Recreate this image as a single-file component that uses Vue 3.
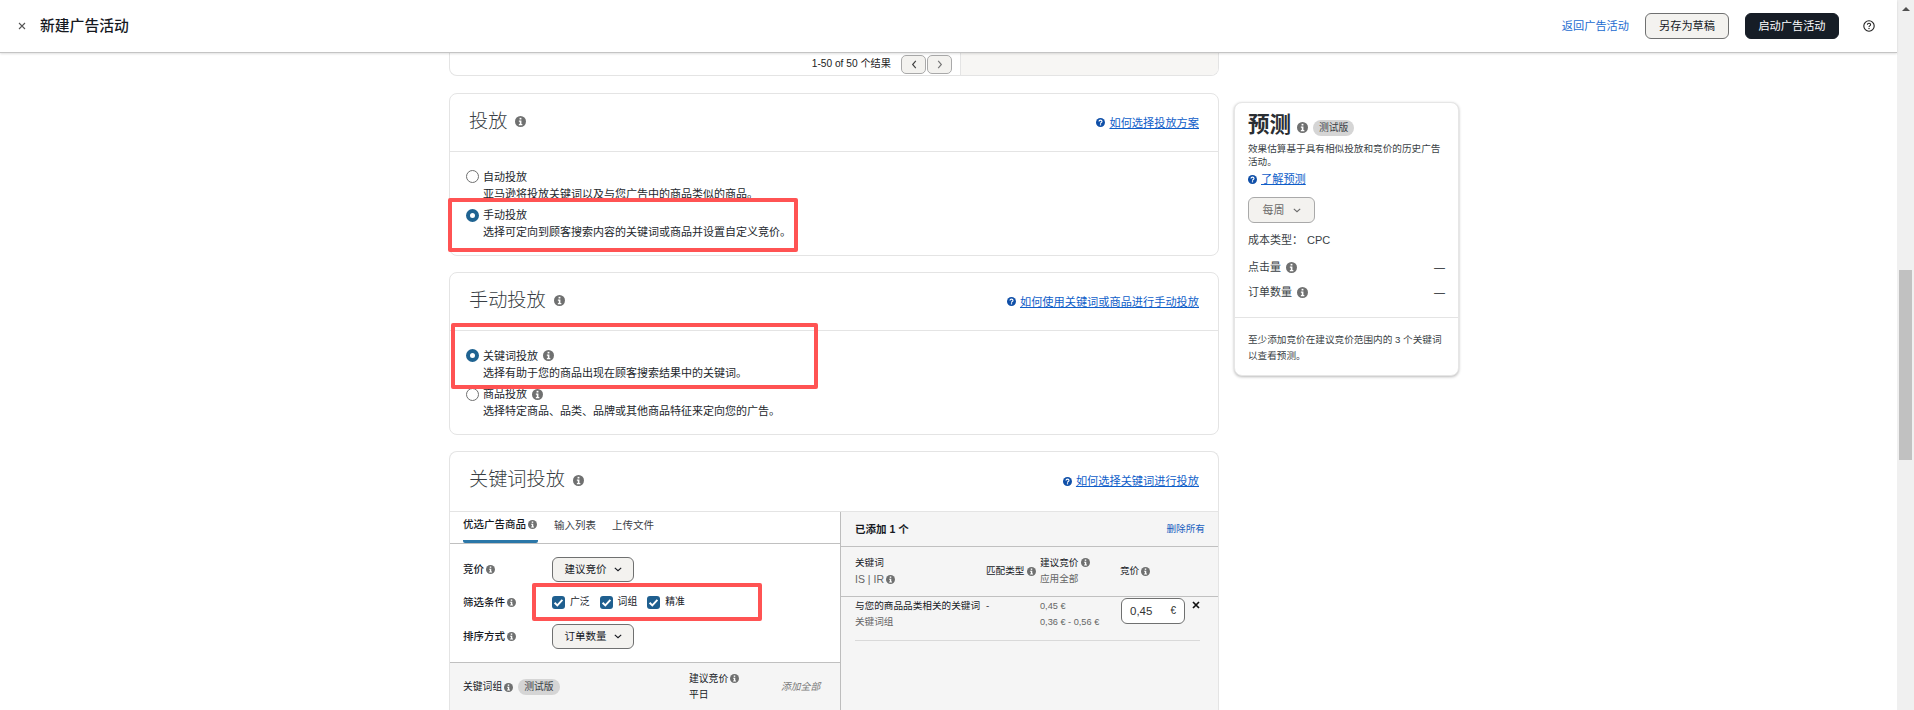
<template>
  <div class="page">
    <svg class="sprite" aria-hidden="true">
      <symbol id="info" viewBox="0 0 12 12">
        <circle cx="6" cy="6" r="6" fill="currentColor" />
        <rect x="5" y="2" width="2" height="1.8" fill="#fff" />
        <path d="M4.2 5h2.8v3.8h1V10H4.2V8.8h1V6.200H4.200z" fill="#fff" />
      </symbol>
      <symbol id="help" viewBox="0 0 12 12">
        <circle cx="6" cy="6" r="6" fill="currentColor" />
        <path d="M4 4.700C4 3.500 4.900 2.900 6 2.900s2 .6 2 1.700c0 1.500-2 1.500-2 2.900" fill="none" stroke="#fff" stroke-width="1.500" />
        <rect x="5.200" y="8.300" width="1.600" height="1.500" fill="#fff" />
      </symbol>
      <symbol id="chevron" viewBox="0 0 10 6">
        <path d="M1 1l4 3.600L9 1" fill="none" stroke="currentColor" stroke-width="1.400" />
      </symbol>
    </svg>

    <div class="viewport">
      <header class="topbar">
        <svg class="close" viewBox="0 0 8 8"><path d="M1 1l6 6M7 1L1 7" stroke="#555" stroke-width="1.100" /></svg>
        <span class="topbar-title">新建广告活动</span>
        <a class="back-link">返回广告活动</a>
        <button class="btn btn-draft">另存为草稿</button>
        <button class="btn btn-launch">启动广告活动</button>
        <svg class="top-help" viewBox="0 0 12 12">
          <circle cx="6" cy="6" r="5.200" fill="none" stroke="#222" stroke-width="1.100" />
          <path d="M4.400 4.800C4.400 3.800 5.100 3.300 6 3.300s1.600.5 1.600 1.400c0 1.200-1.600 1.200-1.600 2.300" fill="none" stroke="#222" stroke-width="1.100" />
          <rect x="5.400" y="7.900" width="1.200" height="1.200" fill="#222" />
        </svg>
      </header>

      <div class="content">
        <main class="main-col">
          <section class="card pager-card">
            <div class="pager">
              <span>1-50 of 50 个结果</span>
              <div class="pager-btns">
                <button class="page-btn"><svg viewBox="0 0 6 10"><path d="M5 1L1.500 5 5 9" fill="none" stroke="#444" stroke-width="1.300" /></svg></button>
                <button class="page-btn"><svg viewBox="0 0 6 10"><path d="M1 1l3.500 4L1 9" fill="none" stroke="#777" stroke-width="1.300" /></svg></button>
              </div>
            </div>
            <div class="pager-side"></div>
          </section>

          <section v-for="group in radioGroups" :key="group.title" class="card">
            <div class="card-head">
              <h2 class="card-title">{{ group.title }}<svg class="info info-lg"><use href="#info" /></svg></h2>
              <a class="help-link"><svg class="help-icon"><use href="#help" /></svg><span>{{ group.link }}</span></a>
            </div>
            <div class="radio-list">
              <div v-for="opt in group.options" :key="opt.label" class="radio-row">
                <span class="radio" :class="{ checked: opt.checked }"></span>
                <div>
                  <div class="radio-label">{{ opt.label }}<svg v-if="opt.info" class="info info-lg"><use href="#info" /></svg></div>
                  <div class="radio-desc">{{ opt.desc }}</div>
                </div>
              </div>
            </div>
          </section>

          <section class="card keyword-card">
            <div class="card-head">
              <h2 class="card-title">关键词投放<svg class="info info-lg"><use href="#info" /></svg></h2>
              <a class="help-link"><svg class="help-icon"><use href="#help" /></svg><span>如何选择关键词进行投放</span></a>
            </div>
            <div class="keyword-body">
              <div class="kw-left">
                <div class="tabs">
                  <div class="tab active">优选广告商品<svg class="info"><use href="#info" /></svg></div>
                  <div class="tab">输入列表</div>
                  <div class="tab">上传文件</div>
                </div>
                <div class="filters">
                  <div class="filter-row">
                    <span class="filter-label">竞价<svg class="info"><use href="#info" /></svg></span>
                    <button class="select-btn">建议竞价<svg class="chev"><use href="#chevron" /></svg></button>
                  </div>
                  <div class="filter-row filter-checks">
                    <span class="filter-label">筛选条件<svg class="info"><use href="#info" /></svg></span>
                    <label v-for="m in matchTypes" :key="m" class="check">
                      <span class="check-box"><svg viewBox="0 0 10 10"><path d="M2 5.200l2.100 2L8 3" fill="none" stroke="#fff" stroke-width="1.500" /></svg></span>
                      {{ m }}
                    </label>
                  </div>
                  <div class="filter-row">
                    <span class="filter-label">排序方式<svg class="info"><use href="#info" /></svg></span>
                    <button class="select-btn">订单数量<svg class="chev"><use href="#chevron" /></svg></button>
                  </div>
                </div>
                <div class="suggest-head">
                  <span class="suggest-name">关键词组<svg class="info"><use href="#info" /></svg><span class="badge">测试版</span></span>
                  <span class="suggest-bid">
                    <span>建议竞价<svg class="info"><use href="#info" /></svg></span>
                    <span>平日</span>
                  </span>
                  <span class="add-all">添加全部</span>
                </div>
              </div>

              <div class="kw-right">
                <div class="added-head">
                  <b>已添加 1 个</b>
                  <a class="remove-all">删除所有</a>
                </div>
                <div class="added-cols">
                  <div class="col-stack">
                    <span>关键词</span>
                    <span class="muted latin">IS | IR<svg class="info"><use href="#info" /></svg></span>
                  </div>
                  <div class="col-center">匹配类型<svg class="info"><use href="#info" /></svg></div>
                  <div class="col-stack">
                    <span>建议竞价<svg class="info"><use href="#info" /></svg></span>
                    <span class="muted">应用全部</span>
                  </div>
                  <div class="col-center">竞价<svg class="info"><use href="#info" /></svg></div>
                </div>
                <div class="added-row">
                  <div class="col-stack">
                    <span>与您的商品品类相关的关键词</span>
                    <span class="muted">关键词组</span>
                  </div>
                  <div>-</div>
                  <div class="col-stack muted bid-values">
                    <span>0,45 €</span>
                    <span>0,36 € - 0,56 €</span>
                  </div>
                  <div class="bid-cell">
                    <div class="bid-input"><span>0,45</span><span class="euro">€</span></div>
                    <svg class="remove-x" viewBox="0 0 8 8"><path d="M1 1l6 6M7 1L1 7" stroke="#111" stroke-width="1.700" /></svg>
                  </div>
                </div>
              </div>
            </div>
          </section>
        </main>

        <aside class="forecast">
          <div class="forecast-title">
            <h2>预测</h2>
            <svg class="info info-lg"><use href="#info" /></svg>
            <span class="badge">测试版</span>
          </div>
          <p class="forecast-desc">效果估算基于具有相似投放和竞价的历史广告活动。</p>
          <a class="help-link learn"><svg class="help-icon"><use href="#help" /></svg><span>了解预测</span></a>
          <button class="period-btn">每周<svg class="chev"><use href="#chevron" /></svg></button>
          <div class="cost-type"><span>成本类型：</span><span>CPC</span></div>
          <div v-for="m in metrics" :key="m" class="metric">
            <span>{{ m }}<svg class="info info-lg"><use href="#info" /></svg></span>
            <span class="dash">—</span>
          </div>
          <p class="forecast-note">至少添加竞价在建议竞价范围内的 3 个关键词以查看预测。</p>
        </aside>
      </div>
    </div>

    <div class="scrollbar">
      <span class="scroll-up"></span>
      <span class="scroll-thumb"></span>
    </div>

    <!-- red annotation boxes drawn over the screenshot -->
    <div class="mark mark-manual"></div>
    <div class="mark mark-keyword"></div>
    <div class="mark mark-filter"></div>
  </div>
</template>

<script setup>
const radioGroups = [
  {
    title: '投放',
    link: '如何选择投放方案',
    options: [
      { label: '自动投放', desc: '亚马逊将投放关键词以及与您广告中的商品类似的商品。' },
      { label: '手动投放', desc: '选择可定向到顾客搜索内容的关键词或商品并设置自定义竞价。', checked: true },
    ],
  },
  {
    title: '手动投放',
    link: '如何使用关键词或商品进行手动投放',
    options: [
      { label: '关键词投放', desc: '选择有助于您的商品出现在顾客搜索结果中的关键词。', checked: true, info: true },
      { label: '商品投放', desc: '选择特定商品、品类、品牌或其他商品特征来定向您的广告。', info: true },
    ],
  },
]

const matchTypes = ['广泛', '词组', '精准']
const metrics = ['点击量', '订单数量']
</script>

<style scoped>
.page {
  position: relative;
  display: flex;
  height: 710px;
  overflow: hidden;
  background: #fff;
  color: #16191f;
  font-family: "Liberation Sans", "Noto Sans CJK SC", sans-serif;
  font-size: 11px;
  line-height: 16px;
}

.sprite {
  position: absolute;
  width: 0;
  height: 0;
}

.viewport {
  flex: 1;
  min-width: 0;
}

.topbar {
  position: relative;
  z-index: 2;
  display: flex;
  align-items: center;
  height: 53px;
  padding: 0 22px 1px 18px;
  background: #fff;
  border-bottom: 1px solid #c4c4c4;
  box-shadow: 0 1px 2px rgba(0, 0, 0, 0.12);
  box-sizing: border-box;
}

.close {
  width: 8px;
  height: 8px;
  margin-right: 14px;
}

.topbar-title {
  flex: 1;
  font-size: 14.800px;
  font-weight: 500;
}

.back-link {
  margin-right: 16px;
  font-size: 11.200px;
  color: #1a6bd0;
}

.btn {
  height: 26px;
  border-radius: 6px;
  font: inherit;
  font-size: 11.200px;
  padding: 0;
}

.btn-draft {
  width: 84px;
  margin-right: 16px;
  background: #f3f2ef;
  border: 1px solid #6f7070;
  color: #16191f;
}

.btn-launch {
  width: 94px;
  margin-right: 24px;
  background: #161d26;
  border: 1px solid #161d26;
  color: #fff;
}

.top-help {
  width: 12px;
  height: 12px;
}

.content {
  display: flex;
  align-items: flex-start;
  gap: 15px;
  padding-left: 449px;
}

.main-col {
  display: flex;
  flex-direction: column;
  gap: 16px;
  width: 770px;
}

.card {
  background: #fff;
  border: 1px solid #e4e4e4;
  border-radius: 8px;
  box-sizing: border-box;
}

.pager-card {
  display: flex;
  height: 23px;
  margin-bottom: 0.800px;
  border-top: none;
  border-radius: 0 0 8px 8px;
  overflow: hidden;
}

.pager {
  display: flex;
  justify-content: flex-end;
  align-items: center;
  gap: 10px;
  width: 510px;
  font-size: 10.200px;
  color: #222;
}

.pager-btns {
  display: flex;
  gap: 1px;
  margin-right: 8px;
}

.page-btn {
  display: flex;
  align-items: center;
  justify-content: center;
  width: 25px;
  height: 19px;
  padding: 0;
  background: #f3f2ef;
  border: 1px solid #a9a9a9;
  border-radius: 5px;
}

.page-btn svg {
  width: 6px;
  height: 9px;
}

.pager-side {
  flex: 1;
  background: #f7f6f4;
  border-left: 1px solid #e4e4e4;
}

.card-head {
  display: flex;
  align-items: center;
  justify-content: space-between;
  height: 57.500px;
  padding: 0 19px 0 19px;
  border-bottom: 1px solid #e4e4e4;
  box-sizing: content-box;
}

.keyword-card .card-head {
  height: 59px;
}

.card-title {
  display: flex;
  align-items: center;
  margin: 0 0 2px;
  font-size: 19.200px;
  font-weight: 300;
  color: #3a3f45;
  line-height: 26px;
}

.card-title .info {
  margin-left: 8px;
}

.info {
  width: 9px;
  height: 9px;
  margin-left: 2px;
  color: #6f7070;
  flex: none;
  vertical-align: -1px;
}

.info-lg {
  width: 11px;
  height: 11px;
  margin-left: 5px;
}

.help-link {
  display: inline-flex;
  align-items: center;
  gap: 4px;
  color: #0f5ec9;
  font-size: 11.200px;
}

.help-link span {
  text-decoration: underline;
}

.help-icon {
  width: 9px;
  height: 9px;
  color: #0f4fa8;
}

.radio-list {
  display: flex;
  flex-direction: column;
  gap: 4.500px;
  padding: 16px 0 14px 16px;
}

.radio-row {
  display: flex;
  gap: 4px;
}

.radio {
  flex: none;
  width: 13px;
  height: 13px;
  margin-top: 2px;
  border: 1px solid #6f7070;
  border-radius: 50%;
  background: #fff;
  box-sizing: border-box;
}

.radio.checked {
  border: 4px solid #1f6391;
}

.radio-label,
.radio-desc {
  display: flex;
  align-items: center;
  height: 17px;
  font-size: 11px;
  color: #23272c;
}

.keyword-card {
  height: 300px;
  border-bottom: none;
  border-radius: 8px 8px 0 0;
  overflow: hidden;
}

.keyword-body {
  display: flex;
  height: 240px;
}

.kw-left {
  width: 391px;
  border-right: 1px solid #bdbdbd;
  background: #fff;
}

.tabs {
  display: flex;
  height: 31px;
  padding-left: 13px;
  gap: 16px;
  border-bottom: 1px solid #c0c0c0;
}

.tab {
  display: flex;
  align-items: center;
  height: 31px;
  padding-bottom: 5px;
  font-size: 10.500px;
  color: #3b4046;
  box-sizing: border-box;
}

.tab.active {
  width: 75px;
  font-weight: 500;
  color: #16191f;
  border-bottom: 3px solid #2b77a8;
  border-radius: 2px;
  padding-bottom: 3px;
}

.filters {
  padding: 13px 0 13px 13px;
  border-bottom: 1px solid #c0c0c0;
}

.filter-row {
  display: flex;
  align-items: center;
  height: 25px;
}

.filter-checks {
  height: 42px;
  padding-bottom: 1px;
  box-sizing: border-box;
}

.filter-label {
  display: flex;
  align-items: center;
  width: 89px;
  font-size: 10.500px;
  font-weight: 500;
}

.select-btn,
.period-btn {
  display: flex;
  align-items: center;
  justify-content: center;
  gap: 7px;
  width: 82px;
  height: 25px;
  padding: 0;
  background: #f3f2ef;
  border: 1px solid #6f7070;
  border-radius: 6px;
  font: inherit;
  font-size: 10.500px;
  color: #16191f;
}

.chev {
  width: 8px;
  height: 5px;
}

.check {
  display: flex;
  align-items: center;
  gap: 5px;
  margin-right: 10px;
  font-size: 9.800px;
}

.check-box {
  display: flex;
  width: 13px;
  height: 13px;
  background: #1f5f8f;
  border-radius: 3px;
}

.check-box svg {
  width: 13px;
  height: 13px;
}

.suggest-head {
  display: grid;
  grid-template-columns: 226px 92px auto;
  align-items: center;
  height: 49px;
  padding-left: 13px;
  background: #f5f5f5;
  font-size: 9.800px;
}

.suggest-name {
  display: flex;
  align-items: center;
}

.badge {
  display: inline-block;
  margin-left: 5px;
  padding: 0 6px;
  background: #d5d5d5;
  border-radius: 8px;
  color: #3a3f45;
  font-size: 9.800px;
  line-height: 16px;
}

.suggest-bid {
  display: flex;
  flex-direction: column;
}

.add-all {
  color: #777;
  font-style: italic;
}

.kw-right {
  flex: 1;
  background: #f5f5f5;
  font-size: 9.650px;
}

.added-head {
  display: flex;
  align-items: center;
  justify-content: space-between;
  height: 34px;
  padding: 0 13px 0 14px;
  border-bottom: 1px solid #c0c0c0;
}

.added-head b {
  font-size: 10.500px;
  font-weight: 700;
}

.remove-all {
  color: #1a5fc0;
}

.added-cols {
  display: grid;
  grid-template-columns: 131px 54px 80px 80px;
  align-items: center;
  height: 49px;
  padding-left: 14px;
  border-bottom: 1px solid #c0c0c0;
}

.col-stack {
  display: flex;
  flex-direction: column;
}

.col-center {
  display: flex;
  align-items: center;
}

.muted {
  color: #666;
}

.latin {
  font-size: 10.500px;
}

.bid-values {
  font-size: 9.200px;
}

.added-row {
  display: grid;
  grid-template-columns: 131px 54px 80px 80px;
  margin: 0 18px 0 14px;
  height: 42px;
  padding-top: 1px;
  border-bottom: 1px solid #d9d9d9;
  white-space: nowrap;
}

.bid-cell {
  display: flex;
  align-items: flex-start;
  gap: 7px;
}

.bid-input {
  display: flex;
  align-items: center;
  justify-content: space-between;
  width: 64px;
  height: 26px;
  margin: 0 0 0 1px;
  padding: 0 8px;
  background: #fff;
  border: 1px solid #6f7070;
  border-radius: 6px;
  box-sizing: border-box;
  font-size: 11.500px;
  color: #333;
}

.euro {
  font-size: 10px;
}

.remove-x {
  width: 8px;
  height: 8px;
  margin-top: 3px;
}

.forecast {
  width: 225px;
  height: 274px;
  margin-top: 49px;
  padding: 9px 13px 0 13px;
  background: #fff;
  border: 1px solid #e6e6e6;
  border-radius: 8px;
  box-shadow: 0 1px 3px rgba(0, 0, 0, 0.28);
  box-sizing: border-box;
  color: #3a3f45;
}

.forecast-title {
  display: flex;
  align-items: center;
  height: 30px;
}

.forecast-title h2 {
  margin: 0 0 4px;
  font-size: 21.500px;
  font-weight: 700;
  color: #2a2e33;
}

.forecast-title .info {
  margin-left: 6px;
}

.forecast-title .badge {
  margin: 2px 0 0 5px;
}

.forecast-desc {
  height: 26px;
  margin: 0;
  font-size: 9.650px;
  line-height: 13px;
}

.learn {
  display: flex;
  height: 14px;
  margin-top: 4px;
}

.period-btn {
  width: 67px;
  height: 26px;
  margin-top: 11px;
  gap: 8px;
  border-color: #a9a9a9;
  font-size: 11px;
  color: #6b6b6b;
}

.cost-type {
  display: flex;
  gap: 4px;
  margin-top: 9px;
}

.metric {
  display: flex;
  justify-content: space-between;
  align-items: center;
  height: 16px;
  margin-top: 9px;
}

.cost-type + .metric {
  margin-top: 11px;
}

.metric > span:first-child {
  display: flex;
  align-items: center;
}

.dash {
  color: #16191f;
}

.forecast-note {
  margin: 17px -13px 0;
  padding: 14px 13px 0;
  border-top: 1px solid #e4e4e4;
  font-size: 9.650px;
}

.scrollbar {
  display: flex;
  flex-direction: column;
  align-items: center;
  flex: none;
  width: 17px;
  background: #f0f0f0;
}

.scroll-up {
  margin-top: 7px;
  border: 4px solid transparent;
  border-top: none;
  border-bottom: 4px solid #505050;
}

.scroll-thumb {
  width: 13px;
  height: 190px;
  margin-top: 259px;
  background: #c1c1c1;
}

.mark {
  position: absolute;
  border: 4px solid #ff5353;
  border-radius: 2px;
  box-sizing: border-box;
}

.mark-manual {
  left: 448px;
  top: 198px;
  width: 350px;
  height: 54px;
}

.mark-keyword {
  left: 451px;
  top: 323px;
  width: 367px;
  height: 66px;
}

.mark-filter {
  left: 532px;
  top: 583px;
  width: 230px;
  height: 38px;
}
</style>
